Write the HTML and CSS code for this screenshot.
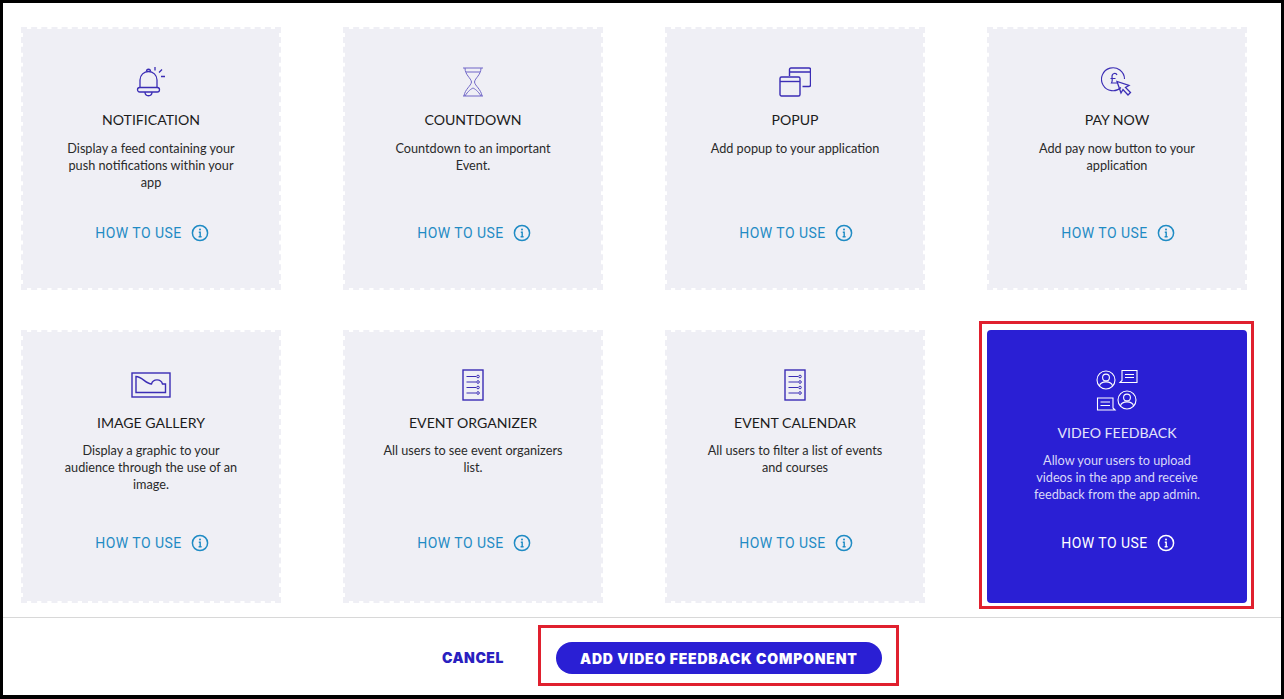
FILE: index.html
```html
<!DOCTYPE html>
<html lang="en">
<head>
    <meta charset="UTF-8">
    <meta name="viewport" content="width=device-width, initial-scale=1.0">
    <title>Add component</title>
    <link rel="stylesheet" href="styles.css">
</head>
<body>
    <svg class="sprite" width="0" height="0">
        <symbol id="info" viewBox="0 0 18 18">
            <circle cx="9" cy="9" r="7.6" fill="none" stroke="currentColor" stroke-width="1.5"/>
            <circle cx="9" cy="5.6" r="1" fill="currentColor"/>
            <path d="M7.8 8.2H9.2V12.6M7.6 12.8H10.6" fill="none" stroke="currentColor" stroke-width="1.4"/>
        </symbol>
        <symbol id="list" viewBox="0 0 22 32">
            <g fill="none" stroke="currentColor">
                <rect x="1" y="1" width="20" height="30" stroke-width="1.4"/>
                <path d="M4.5 7.5H14M4.5 13H14M4.5 18.5H14M4.5 24H14" stroke-width="1"/>
                <circle cx="16" cy="7.5" r="1.3"/>
                <circle cx="16" cy="13" r="1.3"/>
                <circle cx="16" cy="18.5" r="1.3"/>
                <circle cx="16" cy="24" r="1.3"/>
            </g>
        </symbol>
    </svg>

    <div class="frame">
        <div class="grid">
            <div class="card">
                <div class="card-icon">
                    <svg width="32" height="32" viewBox="0 0 32 32" fill="none" stroke="currentColor" stroke-width="1.3">
                        <path d="M5 21.5V14C5 9 9 5.5 13.5 5.5S22 9 22 14V21.5"/>
                        <rect x="2.5" y="21.5" width="22" height="4.5" rx="2.2"/>
                        <path d="M11.5 5.5C11.5 2.5 15.5 2.5 15.500 5.5M10 26C10 31 17 31 17 26"/>
                        <path d="M20 4.5V1M24 6.5L27 3.5M26 10.500H30"/>
                    </svg>
                </div>
                <h3 class="card-title">NOTIFICATION</h3>
                <p class="card-text">Display a feed containing your push notifications within your app</p>
                <a class="how-to" href="#">HOW TO USE <svg width="18" height="18"><use href="#info"/></svg></a>
            </div>
            <div class="card">
                <div class="card-icon">
                    <svg class="faint" width="22" height="30" viewBox="0 0 22 30" fill="none" stroke="currentColor" stroke-width="1">
                        <path d="M1 1H21M1 29H21M3 1C3 8 9 11 9.500 15C9 19 3 22 2 29M19 1C19 8 13 11 12.500 15C13 19 19 22 20 29"/>
                        <path d="M4 5H18M3 29C6 24 9 22 11 21C13 22 16 24 19 29"/>
                    </svg>
                </div>
                <h3 class="card-title">COUNTDOWN</h3>
                <p class="card-text">Countdown to an important<br>Event.</p>
                <a class="how-to" href="#">HOW TO USE <svg width="18" height="18"><use href="#info"/></svg></a>
            </div>
            <div class="card">
                <div class="card-icon">
                    <svg width="32" height="30" viewBox="0 0 32 30" fill="none" stroke="currentColor" stroke-width="1.4">
                        <path d="M10.500 9V2.500C10.500 1.500 11 1 12 1H30C31 1 31.500 1.500 31.500 2.500V18C31.500 19 31 19.500 30 19.500H23.500M10.500 5H31.500"/>
                        <rect x="1" y="10" width="20" height="19" rx="1.500"/>
                        <path d="M1 14.500H21"/>
                    </svg>
                </div>
                <h3 class="card-title">POPUP</h3>
                <p class="card-text">Add popup to your application</p>
                <a class="how-to" href="#">HOW TO USE <svg width="18" height="18"><use href="#info"/></svg></a>
            </div>
            <div class="card">
                <div class="card-icon">
                    <svg width="32" height="32" viewBox="0 0 32 32" fill="none" stroke="currentColor" stroke-width="1.1">
                        <path d="M20 21.500A11.500 11.500 0 1 1 23.500 13"/>
                        <path d="M16 9C15 6.500 11 7 11 10.500C11 13 12 14 10.500 17H16.500M9.500 12.500H14.500" stroke-width="1.2"/>
                        <path d="M16 15.500L20 27L22 23.500L27 29L29.500 26.500L24.500 21.500L28 19.500Z" stroke-width="1.3"/>
                    </svg>
                </div>
                <h3 class="card-title">PAY NOW</h3>
                <p class="card-text">Add pay now button to your application</p>
                <a class="how-to" href="#">HOW TO USE <svg width="18" height="18"><use href="#info"/></svg></a>
            </div>

            <div class="card">
                <div class="card-icon">
                    <svg width="40" height="26" viewBox="0 0 40 26" fill="none" stroke="currentColor" stroke-width="1.4">
                        <rect x="1" y="1" width="38" height="24"/>
                        <path d="M5 4.500C11 4.500 15 12 20.500 12C22 6.500 30 6.500 31.500 12H34.500V20.500H5Z"/>
                    </svg>
                </div>
                <h3 class="card-title">IMAGE GALLERY</h3>
                <p class="card-text">Display a graphic to your audience through the use of an image.</p>
                <a class="how-to" href="#">HOW TO USE <svg width="18" height="18"><use href="#info"/></svg></a>
            </div>
            <div class="card">
                <div class="card-icon">
                    <svg width="22" height="32"><use href="#list"/></svg>
                </div>
                <h3 class="card-title">EVENT ORGANIZER</h3>
                <p class="card-text">All users to see event organizers list.</p>
                <a class="how-to" href="#">HOW TO USE <svg width="18" height="18"><use href="#info"/></svg></a>
            </div>
            <div class="card">
                <div class="card-icon">
                    <svg width="22" height="32"><use href="#list"/></svg>
                </div>
                <h3 class="card-title">EVENT CALENDAR</h3>
                <p class="card-text">All users to filter a list of events and courses</p>
                <a class="how-to" href="#">HOW TO USE <svg width="18" height="18"><use href="#info"/></svg></a>
            </div>
            <div class="card selected">
                <div class="card-icon">
                    <svg width="44" height="42" viewBox="0 0 44 42" fill="none" stroke="currentColor" stroke-width="1.1">
                        <circle cx="11" cy="11" r="9"/>
                        <circle cx="11" cy="8.500" r="3.400"/>
                        <path d="M4.500 17C5.500 11.500 16.500 11.500 17.500 17"/>
                        <circle cx="32" cy="31" r="9"/>
                        <circle cx="32" cy="28.500" r="3.400"/>
                        <path d="M25.500 37C26.500 31.500 37.500 31.500 38.500 37"/>
                        <path d="M25 13.500L27 11.500V1.500H42V13.500Z"/>
                        <path d="M30 5.500H39M30 8.500H39"/>
                        <path d="M20 41L18 39V29H2.500V41Z"/>
                        <path d="M5.500 33H15M5.500 36.500H15"/>
                    </svg>
                </div>
                <h3 class="card-title">VIDEO FEEDBACK</h3>
                <p class="card-text">Allow your users to upload videos in the app and receive feedback from the app admin.</p>
                <a class="how-to" href="#">HOW TO USE <svg width="18" height="18"><use href="#info"/></svg></a>
            </div>
        </div>

        <div class="footer">
            <a class="cancel" href="#">CANCEL</a>
            <div class="add-box">
                <button class="add-btn">ADD VIDEO FEEDBACK COMPONENT</button>
            </div>
        </div>
    </div>
</body>
</html>
```

FILE: styles.css
```css
* {
    box-sizing: border-box;
}
body {
    margin: 0;
    background: #ffffff;
    font-family: "Lato", Arial, sans-serif;
    color: #222222;
}
.sprite {
    position: absolute;
}
.frame {
    height: 699px;
    border-style: solid;
    border-color: #000000;
    border-width: 3px 3px 4px 3px;
    display: flex;
    flex-direction: column;
}
.grid {
    display: grid;
    grid-template-columns: repeat(4, 260px);
    grid-template-rows: 263px 273px;
    column-gap: 62px;
    row-gap: 40px;
    padding: 24px 18px 14px;
}
.card {
    display: flex;
    flex-direction: column;
    align-items: center;
    padding: 35px 34px 46px;
    background: #efeff5;
    background-clip: padding-box;
    border: 2px dashed #efeff5;
    text-align: center;
}
.card:nth-child(n+5) {
    padding-bottom: 49px;
}
.card:nth-child(n+5) .card-title {
    margin-bottom: 9px;
}
.card-icon {
    color: #3b2db5;
    height: 36px;
    display: flex;
    align-items: center;
    justify-content: center;
    margin-bottom: 10px;
}
.faint {
    opacity: 0.7;
}
.card-title {
    margin: 0 0 10px;
    font-size: 14.1px;
    line-height: 20px;
    font-weight: 400;
    white-space: nowrap;
    color: #1c1c1c;
}
.card-text {
    margin: 0;
    font-size: 12.7px;
    line-height: 17px;
    color: #2a2a2a;
}
.how-to {
    margin-top: auto;
    padding-left: 2px;
    display: flex;
    align-items: center;
    gap: 9px;
    font-family: "Roboto", Arial, sans-serif;
    font-size: 14px;
    font-weight: 400;
    letter-spacing: 0.45px;
    color: #1f8bc4;
    text-decoration: none;
}
.selected {
    position: relative;
    background: #2a1fd4;
    border: 2px solid #2a1fd4;
    border-radius: 4px;
}
/* red marker round the chosen card */
.selected::after {
    content: "";
    position: absolute;
    top: -11px;
    left: -10px;
    right: -9px;
    bottom: -8px;
    border: 3px solid #e0202e;
}
.selected .card-icon {
    height: 46px;
    color: #ffffff;
}
.selected .card-title {
    color: #e4e4fb;
}
.selected .card-text {
    padding: 0 6px;
    color: #d9d8f8;
}
.selected .how-to {
    color: #ffffff;
}
.footer {
    flex: 1;
    display: flex;
    align-items: flex-start;
    gap: 34px;
    padding: 7px 0 0 439px;
    border-top: 1px solid #d8d8d8;
}
.cancel {
    margin-top: 24px;
    font-family: "Inter", Arial, sans-serif;
    font-size: 14px;
    font-weight: 900;
    letter-spacing: 0.5px;
    color: #2a1fc0;
    text-decoration: none;
}
.add-box {
    width: 361px;
    height: 61px;
    border: 3px solid #e0202e;
    padding: 14px 14px 9px 15px;
}
.add-btn {
    width: 326px;
    height: 32px;
    border: none;
    border-radius: 16px;
    background: #2a1fd4;
    color: #ffffff;
    font-family: "Inter", Arial, sans-serif;
    font-size: 14px;
    font-weight: 900;
    letter-spacing: 0.8px;
    padding: 0;
}
```
